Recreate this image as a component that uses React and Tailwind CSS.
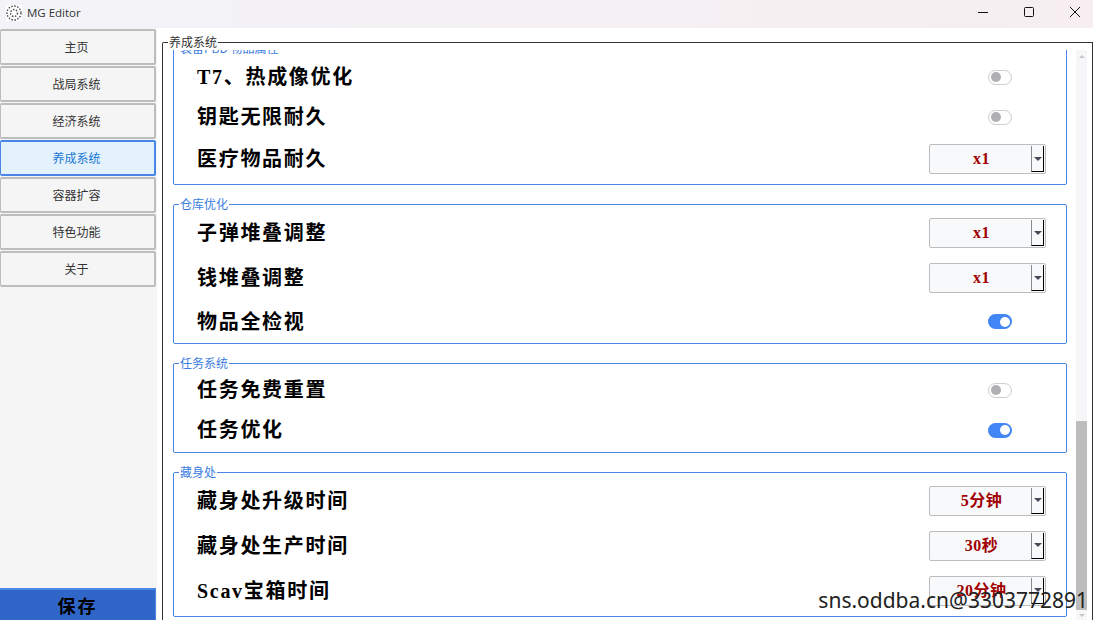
import React from "react";

const serif = "font-['Liberation_Serif','Noto_Sans_CJK_SC',serif]";

function Toggle({ on }) {
  if (on) {
    return (
      <div className="w-6 h-[15px] rounded-full bg-[#4285f4] flex items-center justify-end pr-[2px]">
        <div className="w-[10px] h-[10px] rounded-full bg-white" />
      </div>
    );
  }
  return (
    <div className="w-6 h-[15px] rounded-full border border-[#cccccc] bg-white flex items-center pl-[2px]">
      <div className="w-[10px] h-[10px] rounded-full bg-[#b0b0b4]" />
    </div>
  );
}

function Combo({ value }) {
  return (
    <div className="w-[117px] h-[30px] rounded-[2px] border border-[#bdbdbd] bg-[#f8f9fb] flex items-center">
      <div className={`flex-1 text-center text-[16px] leading-none font-bold tracking-[0.5px] text-[#a00000] pl-[2px] ${serif}`}>
        {value}
      </div>
      <div className="w-[13px] h-[26px] mr-[1px] border-l border-l-[#8a8a8a] border-r border-r-black border-b border-b-black bg-[#f8f9fb] flex items-center justify-center">
        <div className="w-0 h-0 border-l-[4px] border-r-[4px] border-t-[4px] border-l-transparent border-r-transparent border-t-[#444a55]" />
      </div>
    </div>
  );
}

function Row({ label, h, children }) {
  return (
    <div className={`flex items-center justify-between pl-[23px] pr-5 ${h}`}>
      <span className={`text-[20px] leading-none font-bold text-black tracking-[1.7px] ${serif}`}>{label}</span>
      {children}
    </div>
  );
}

function ToggleRow({ label, h, on }) {
  return (
    <Row label={label} h={h}>
      <div className="w-[117px] flex justify-center pl-[25px] pr-[1px]">
        <Toggle on={on} />
      </div>
    </Row>
  );
}

function Group({ title, className, children }) {
  return (
    <div className={`relative border border-[#4a86e8] rounded-[2px] ${className}`}>
      <span className="absolute -top-[9px] left-[5px] bg-white px-[1px] text-[12px] leading-[16px] text-[#3a7ce0] font-['Noto_Sans_CJK_SC',sans-serif]">
        {title}
      </span>
      {children}
    </div>
  );
}

const navItems = ["主页", "战局系统", "经济系统", "养成系统", "容器扩容", "特色功能", "关于"];

export default function App() {
  return (
    <div className="relative w-[1093px] h-[620px] overflow-hidden bg-white flex flex-col font-['Noto_Sans_CJK_SC',sans-serif]">
      <header className="h-[28px] shrink-0 flex items-center bg-gradient-to-r from-[#f3f3f8] to-[#f6eef0]">
        <svg className="ml-[6px] mb-[3px] w-[16px] h-[16px] bg-white" viewBox="0 0 16 16" fill="none" stroke="#444" strokeWidth="1.4" strokeDasharray="1.5 1.5">
          <circle cx="8" cy="8" r="7" />
          <circle cx="8" cy="8" r="3.5" />
        </svg>
        <span className="ml-[5px] mb-[2px] text-[11.5px] text-[#333] font-['Open_Sans',sans-serif]">MG Editor</span>
        <div className="ml-auto flex items-center">
          <svg className="w-[46px] h-[28px]" viewBox="0 0 46 28" fill="none" stroke="#111" strokeWidth="1">
            <path d="M18 12.5h10" />
          </svg>
          <svg className="w-[46px] h-[28px]" viewBox="0 0 46 28" fill="none" stroke="#111" strokeWidth="1">
            <rect x="18.5" y="7.5" width="9" height="9" rx="1" />
          </svg>
          <svg className="w-[41px] h-[28px]" viewBox="0 0 41 28" fill="none" stroke="#111" strokeWidth="1">
            <path d="M18 7l10 10M28 7l-10 10" />
          </svg>
        </div>
      </header>

      <div className="flex-1 flex min-h-0">
        <aside className="w-[157px] shrink-0 bg-[#f5f5f5] flex flex-col pt-[1px] pr-[1px]">
          <nav className="flex flex-col gap-px w-[156px]">
            {navItems.map((item) =>
              item === "养成系统" ? (
                <div key={item} className="h-[36px] border-2 border-l border-[#4a86e8] rounded-[2px] bg-[#e3f2fd] flex items-center justify-center pr-[2px] text-[12px] text-[#1976d2]">
                  {item}
                </div>
              ) : (
                <div key={item} className="h-[36px] border-2 border-l border-[#bdbdbd] rounded-[2px] bg-[#f5f5f5] flex items-center justify-center pr-[2px] text-[12px] text-[#333]">
                  {item}
                </div>
              )
            )}
          </nav>
          <button className="mt-auto w-[156px] h-[32px] border-t-2 border-t-[#4a86e8] border-r border-r-[#4a86e8] bg-[#3066c8] text-[18px] font-bold text-black tracking-[2px]">
            保存
          </button>
        </aside>

        <main className="flex-1 min-w-0 pl-[5px] pt-[14px]">
          <div className="relative h-[600px] border-t border-l border-r border-[#333] rounded-tl-[2px] pl-[10px] pr-[5px]">
            <span className="absolute -top-[9px] left-[5px] z-10 bg-white px-[1px] text-[12px] leading-[16px] text-[#333]">养成系统</span>
            <div className="flex h-[577px] mt-[7px]">
              <div className="flex-1 min-w-0 overflow-hidden">
                <div className="flex flex-col gap-[19px] -mt-[2px]">
                  <Group title="装备PBD 物品属性" className="h-[137px] pt-[8px]">
                    <ToggleRow label="T7、热成像优化" h="h-[40px]" />
                    <ToggleRow label="钥匙无限耐久" h="h-[40px]" />
                    <Row label="医疗物品耐久" h="h-[44px]"><Combo value="x1" /></Row>
                  </Group>
                  <Group title="仓库优化" className="h-[140px] pt-[5px]">
                    <Row label="子弹堆叠调整" h="h-[46px]"><Combo value="x1" /></Row>
                    <Row label="钱堆叠调整" h="h-[44px]"><Combo value="x1" /></Row>
                    <ToggleRow label="物品全检视" h="h-[43px]" on />
                  </Group>
                  <Group title="任务系统" className="h-[90px] pt-[6px]">
                    <ToggleRow label="任务免费重置" h="h-[40px]" />
                    <ToggleRow label="任务优化" h="h-[40px]" on />
                  </Group>
                  <Group title="藏身处" className="h-[145px] pt-[5px]">
                    <Row label="藏身处升级时间" h="h-[45px]"><Combo value="5分钟" /></Row>
                    <Row label="藏身处生产时间" h="h-[45px]"><Combo value="30秒" /></Row>
                    <Row label="Scav宝箱时间" h="h-[45px]"><Combo value="20分钟" /></Row>
                  </Group>
                </div>
              </div>
              <div className="w-[11px] ml-[9px] bg-[#f7f7fa] flex flex-col items-center">
                <div className="mt-[5px] w-0 h-0 border-l-[3px] border-r-[3px] border-b-[3px] border-l-transparent border-r-transparent border-b-[#c8c8c8]" />
                <div className="mt-[363px] w-full h-[189px] bg-[#bdbdbd]" />
                <div className="mt-[4px] w-0 h-0 border-l-[3px] border-r-[3px] border-t-[3px] border-l-transparent border-r-transparent border-t-[#c8c8c8]" />
              </div>
            </div>
          </div>
        </main>
      </div>

      <span className="absolute right-[5px] bottom-[8px] text-[21px] leading-[24px] text-[#222] font-['Noto_Sans',sans-serif]">
        sns.oddba.cn@3303772891
      </span>
    </div>
  );
}
